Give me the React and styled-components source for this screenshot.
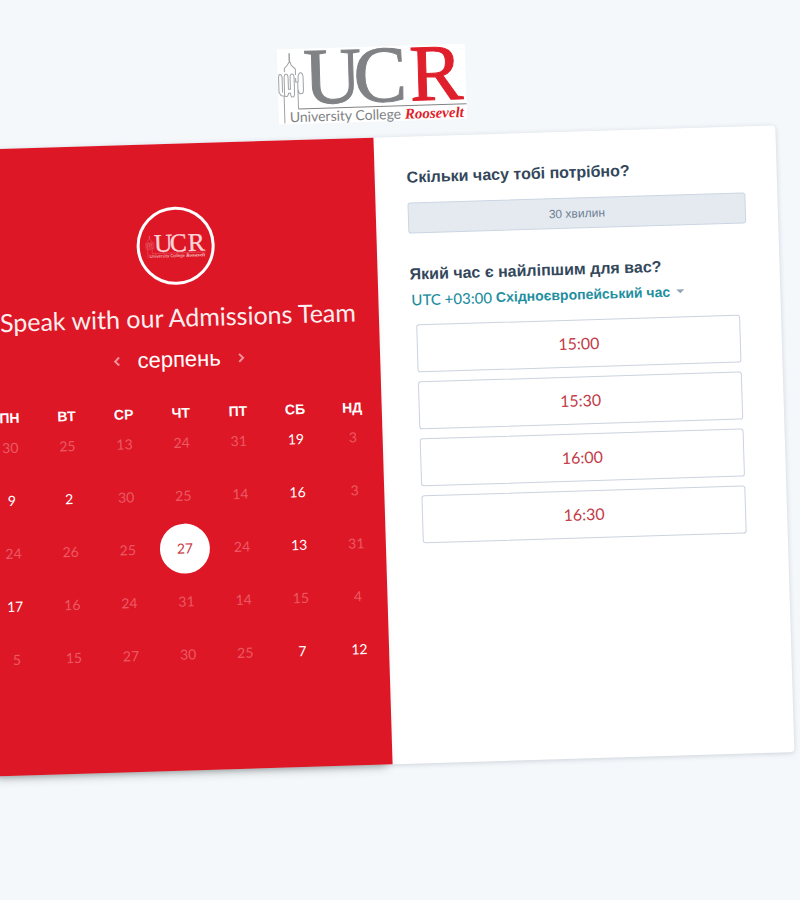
import React, { useState } from "react";
import styled, { createGlobalStyle } from "styled-components";

const GlobalStyle = createGlobalStyle`
  *, *::before, *::after { box-sizing: border-box; }
  body {
    margin: 0;
    background: #f4f8fb;
    font-family: "Liberation Sans", Arial, sans-serif;
    color: #33475b;
  }
  button { font: inherit; color: inherit; margin: 0; }
  h1, h2, p { margin: 0; }
`;

const Viewport = styled.div`
  min-height: 100vh;
  overflow: hidden;
`;

const Tilt = styled.div`
  display: flow-root;
  min-height: 100vh;
  transform: rotate(-1.75deg);
`;

const Scheduler = styled.main`
  margin: 46px 15px 0 -19px;
  display: flex;
  flex-direction: column;
  gap: 16px;
`;

const Brand = styled.header`
  align-self: center;
  width: 188px;
  height: 75px;
  background: #fff;
`;

const LogoDrawing = styled.svg`
  display: block;
  overflow: visible;
`;

const Card = styled.div`
  display: grid;
  grid-template-columns: 1fr 1fr;
  min-height: 627px;
  border-radius: 4px;
  background: #fff;
  box-shadow: 0 1px 5px rgba(45, 62, 80, 0.2);
`;

const CalendarPane = styled.section`
  display: flex;
  flex-direction: column;
  align-items: center;
  padding: 63px 1px 0;
  background: #dd1726;
  color: #fff;
  box-shadow: 0 8px 10px -6px rgba(60, 70, 60, 0.4);
`;

const Avatar = styled.div`
  display: grid;
  place-items: center;
  width: 78px;
  height: 78px;
  border: 3px solid #fff;
  border-radius: 50%;
`;

const Title = styled.h1`
  margin-top: 16px;
  color: #fdeeef;
  font: 400 25px/32px Lato, sans-serif;
  white-space: nowrap;
`;

const MonthNav = styled.div`
  display: flex;
  align-items: center;
  justify-content: center;
  gap: 12px;
  margin-top: 12px;
`;

const MonthName = styled.p`
  font-size: 22px;
  line-height: 30px;
`;

const ArrowButton = styled.button`
  display: grid;
  place-items: center;
  width: 16px;
  height: 24px;
  padding: 0;
  border: 0;
  background: none;
  color: #f2929a;
  cursor: pointer;
`;

const Week = styled.div`
  align-self: stretch;
  display: grid;
  grid-template-columns: repeat(7, 1fr);
  justify-items: center;
`;

const WeekHeader = styled(Week)`
  margin-top: 28px;
  font-size: 14px;
  font-weight: 700;
  line-height: 20px;
`;

const Days = styled(Week)`
  margin-top: 2px;
  row-gap: 17px;
`;

const Day = styled.button`
  width: 50px;
  height: ${(p) => (p.$selected ? "50px" : "36px")};
  margin: ${(p) => (p.$selected ? "-7px 0" : "0")};
  padding: 0;
  border: 0;
  border-radius: 50%;
  background: ${(p) => (p.$selected ? "#fff" : "none")};
  color: ${(p) => (p.$selected ? "#c93a45" : "#fff")};
  font: 400 14px/20px Lato, sans-serif;
  cursor: pointer;
  &:disabled { color: #ec5963; cursor: default; }
`;

const TimePane = styled.section`
  padding: 29px 32px;
`;

const Question = styled.h2`
  font-size: 16px;
  font-weight: 700;
  line-height: 24px;
`;

const Duration = styled.button`
  display: block;
  width: 100%;
  height: 31px;
  margin: 13px 0 29px;
  padding: 0;
  border: 1px solid #cbd6e2;
  border-radius: 3px;
  background: #e5eaf0;
  color: #6d8095;
  font-size: 12px;
`;

const Zone = styled.button`
  display: flex;
  align-items: center;
  gap: 4px;
  height: 24px;
  margin-top: 1px;
  padding: 0 0 0 1px;
  border: 0;
  background: none;
  color: #1f8f9f;
  font-size: 14px;
  font-weight: 700;
  white-space: nowrap;
  cursor: pointer;
`;

const Offset = styled.span`
  font: 500 15px/20px Lato, sans-serif;
`;

const Caret = styled.span`
  margin-left: 2px;
  border: 4px solid transparent;
  border-top-color: #8fa3b5;
  border-bottom: 0;
`;

const Slots = styled.div`
  display: grid;
  gap: 9px;
  padding: 13px 9px 0 5px;
`;

const Slot = styled.button`
  height: 48px;
  padding: 0;
  border: 1px solid #cbd3de;
  border-radius: 3px;
  background: #fff;
  color: #c23b48;
  font: 400 16px/20px Lato, sans-serif;
  cursor: pointer;
`;

function Logo({ width, height, mono }) {
  const grey = mono ? "#fbd5d8" : "#808285";
  const red = mono ? "#fbd5d8" : "#df1f2b";
  const line = mono ? "#f2929a" : "#a0a2a5";
  return (
    <LogoDrawing width={width} height={height} viewBox="0 0 188 75" role="img" aria-label="University College Roosevelt">
      <g fill="none" stroke={line} strokeWidth="1">
        <path d="M12 4V12M12.500 4V12L10 16L7 19V23M12.500 12L14 16L18 20V26M6 74V47L3 46L1 43V28Q1 25 2.500 25T4.500 28V43M6.500 47V29Q6.500 25 8.500 25T10.500 29V40H12.500V29Q12.500 25 14.500 25T16.500 29V44Q16.500 48 14.500 48T12.500 44H10.500Q10 48 7 47M20 60V33H18V29M20.500 33V28Q21 24 23 24T25.500 28V41Q25.500 45 23 45T20.500 41" />
        <path d="M20 60H188" stroke={mono ? line : "#808285"} />
      </g>
      <g fontFamily="Liberation Serif, serif" fontSize="80" strokeWidth="1">
        <text x="26" y="55" fill={grey} stroke={grey}>U</text>
        <text x="76" y="55" fill={grey} stroke={grey}>C</text>
        <text x="132" y="55" fill={red} stroke={red}>R</text>
      </g>
      <text x="11" y="73" fontFamily="Lato, sans-serif" fontSize="14" fill={grey}>University College</text>
      <text x="126" y="73" fontFamily="Liberation Serif, serif" fontSize="15" fontWeight="700" fontStyle="italic" fill={red}>Roosevelt</text>
    </LogoDrawing>
  );
}

function Chevron({ d }) {
  return (
    <svg width="8" height="12" viewBox="0 0 8 12" fill="none" stroke="currentColor" strokeWidth="2" aria-hidden="true">
      <path d={d} />
    </svg>
  );
}

const weekdays = ["ПН", "ВТ", "СР", "ЧТ", "ПТ", "СБ", "НД"];
const days = [
  30, 25, 13, 24, 31, 19, 3,
  9, 2, 30, 25, 14, 16, 3,
  24, 26, 25, 27, 24, 13, 31,
  17, 16, 24, 31, 14, 15, 4,
  5, 15, 27, 30, 25, 7, 12,
];
const available = new Set([5, 7, 8, 12, 17, 19, 21, 33, 34]);
const times = ["15:00", "15:30", "16:00", "16:30"];

export default function App() {
  const [selected, setSelected] = useState(17);
  return (
    <Viewport>
      <GlobalStyle />
      <Tilt>
        <Scheduler>
          <Brand><Logo width={188} height={75} /></Brand>
          <Card>
            <CalendarPane>
              <Avatar><Logo width={60} height={24} mono /></Avatar>
              <Title>Speak with our Admissions Team</Title>
              <MonthNav>
                <ArrowButton aria-label="Попередній місяць"><Chevron d="M6 2L2 6L6 10" /></ArrowButton>
                <MonthName>серпень</MonthName>
                <ArrowButton aria-label="Наступний місяць"><Chevron d="M2 2L6 6L2 10" /></ArrowButton>
              </MonthNav>
              <WeekHeader>{weekdays.map((d) => <span key={d}>{d}</span>)}</WeekHeader>
              <Days>
                {days.map((d, i) => (
                  <Day key={i} $selected={i === selected} disabled={!available.has(i)} onClick={() => setSelected(i)}>{d}</Day>
                ))}
              </Days>
            </CalendarPane>
            <TimePane>
              <Question>Скільки часу тобі потрібно?</Question>
              <Duration>30 хвилин</Duration>
              <Question>Який час є найліпшим для вас?</Question>
              <Zone><Offset>UTC +03:00</Offset>Східноєвропейський час<Caret /></Zone>
              <Slots>{times.map((t) => <Slot key={t}>{t}</Slot>)}</Slots>
            </TimePane>
          </Card>
        </Scheduler>
      </Tilt>
    </Viewport>
  );
}
